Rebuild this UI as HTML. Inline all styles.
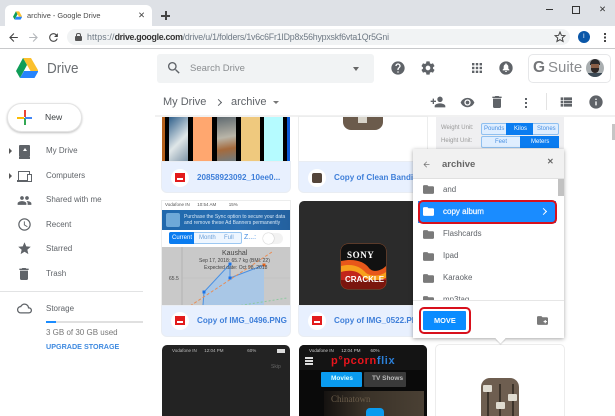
<!DOCTYPE html>
<html><head><meta charset="utf-8"><style>
html,body{margin:0;padding:0}
body{width:615px;height:416px;overflow:hidden;background:#fff;position:relative;font-family:"Liberation Sans",sans-serif}
div,span,svg{position:absolute}
.t{white-space:nowrap;line-height:1}
.i{fill:#5f6368}
.n{font-size:8px;color:#5f6368;left:46px}
.r{font-size:7.900px;color:#5f6368;left:443px}
.f{font-size:8.100px;font-weight:bold;color:#3f7fd9}
.foot{background:#e8f0fe;border-radius:0 0 5px 5px}
.c{width:18px;height:18px;border-radius:50%;background:#fff}
.red{width:10px;height:9px;background:#e31b1b}
.red:after{content:"";position:absolute;left:2px;bottom:2px;width:6px;height:2px;background:#fff}
</style></head><body>
<svg width="0" height="0" style="position:absolute"><defs>
<symbol id="help" viewBox="0 0 24 24"><path d="M12 2C6.48 2 2 6.48 2 12s4.48 10 10 10 10-4.48 10-10S17.52 2 12 2zm1 17h-2v-2h2v2zm2.07-7.75l-.9.92C13.45 12.9 13 13.5 13 15h-2v-.5c0-1.1.45-2.1 1.17-2.83l1.24-1.26c.37-.36.59-.86.59-1.41 0-1.1-.9-2-2-2s-2 .9-2 2H8c0-2.21 1.79-4 4-4s4 1.79 4 4c0 .88-.36 1.68-.93 2.25z"/></symbol>
<symbol id="gear" viewBox="0 0 24 24"><path d="M19.43 12.98c.04-.32.07-.64.07-.98s-.03-.66-.07-.98l2.11-1.65c.19-.15.24-.42.12-.64l-2-3.46c-.12-.22-.39-.3-.61-.22l-2.49 1c-.52-.4-1.08-.73-1.69-.98l-.38-2.65C14.46 2.18 14.25 2 14 2h-4c-.25 0-.46.18-.49.42l-.38 2.65c-.61.25-1.17.59-1.69.98l-2.49-1c-.23-.09-.49 0-.61.22l-2 3.46c-.13.22-.07.49.12.64l2.11 1.65c-.04.32-.07.65-.07.98s.03.66.07.98l-2.11 1.65c-.19.15-.24.42-.12.64l2 3.46c.12.22.39.3.61.22l2.49-1c.52.4 1.08.73 1.69.98l.38 2.65c.03.24.24.42.49.42h4c.25 0 .46-.18.49-.42l.38-2.65c.61-.25 1.17-.59 1.69-.98l2.49 1c.23.09.49 0 .61-.22l2-3.46c.12-.22.07-.49-.12-.64l-2.11-1.65zM12 15.5c-1.93 0-3.5-1.57-3.5-3.5s1.57-3.5 3.5-3.5 3.5 1.57 3.5 3.5-1.57 3.5-3.5 3.5z"/></symbol>
<symbol id="padd" viewBox="0 0 24 24"><path d="M15 12c2.21 0 4-1.79 4-4s-1.79-4-4-4-4 1.79-4 4 1.79 4 4 4zm-9-2V7H4v3H1v2h3v3h2v-3h3v-2H6zm9 4c-2.67 0-8 1.34-8 4v2h16v-2c0-2.66-5.33-4-8-4z"/></symbol>
<symbol id="eye" viewBox="0 0 24 24"><path d="M12 4.5C7 4.5 2.73 7.61 1 12c1.73 4.39 6 7.5 11 7.5s9.27-3.11 11-7.5c-1.73-4.39-6-7.5-11-7.5zM12 17c-2.76 0-5-2.24-5-5s2.24-5 5-5 5 2.24 5 5-2.24 5-5 5zm0-8c-1.66 0-3 1.34-3 3s1.34 3 3 3 3-1.34 3-3-1.34-3-3-3z"/></symbol>
<symbol id="del" viewBox="0 0 24 24"><path d="M6 19c0 1.1.9 2 2 2h8c1.1 0 2-.9 2-2V7H6v12zM19 4h-3.5l-1-1h-5l-1 1H5v2h14V4z"/></symbol>
<symbol id="list" viewBox="0 0 24 24"><path d="M4 14h4v-4H4v4zm0 5h4v-4H4v4zM4 9h4V5H4v4zm5 5h12v-4H9v4zm0 5h12v-4H9v4zM9 5v4h12V5H9z"/></symbol>
<symbol id="info" viewBox="0 0 24 24"><path d="M12 2C6.48 2 2 6.48 2 12s4.48 10 10 10 10-4.48 10-10S17.52 2 12 2zm1 15h-2v-6h2v6zm0-8h-2V7h2v2z"/></symbol>
<symbol id="ppl" viewBox="0 0 24 24"><path d="M16 11c1.66 0 2.99-1.34 2.99-3S17.66 5 16 5c-1.66 0-3 1.34-3 3s1.34 3 3 3zm-8 0c1.66 0 2.99-1.34 2.99-3S9.66 5 8 5C6.34 5 5 6.34 5 8s1.34 3 3 3zm0 2c-2.33 0-7 1.17-7 3.5V19h14v-2.5c0-2.33-4.67-3.5-7-3.5zm8 0c-.29 0-.62.02-.97.05 1.16.84 1.97 1.97 1.97 3.45V19h6v-2.5c0-2.33-4.67-3.5-7-3.5z"/></symbol>
<symbol id="star" viewBox="0 0 24 24"><path d="M12 17.27L18.18 21l-1.64-7.03L22 9.24l-7.19-.61L12 2 9.19 8.63 2 9.24l5.46 4.73L5.82 21z"/></symbol>
<symbol id="clock" viewBox="0 0 24 24"><path d="M11.99 2C6.47 2 2 6.48 2 12s4.47 10 9.99 10C17.52 22 22 17.52 22 12S17.52 2 11.99 2zM12 20c-4.42 0-8-3.58-8-8s3.58-8 8-8 8 3.58 8 8-3.58 8-8 8zm.5-13H11v6l5.25 3.15.75-1.23-4.5-2.67z"/></symbol>
<symbol id="cloud" viewBox="0 0 24 24"><path d="M19.35 10.04C18.67 6.59 15.64 4 12 4 9.11 4 6.6 5.64 5.35 8.04 2.34 8.36 0 10.91 0 14c0 3.31 2.69 6 6 6h13c2.76 0 5-2.24 5-5 0-2.64-2.05-4.78-4.65-4.96zM19 18H6c-2.21 0-4-1.79-4-4s1.79-4 4-4h.71C7.37 7.69 9.48 6 12 6c3.04 0 5.5 2.46 5.5 5.5v.5H19c1.66 0 3 1.34 3 3s-1.34 3-3 3z"/></symbol>
<symbol id="folder" viewBox="0 0 24 24"><path d="M10 4H4c-1.1 0-1.99.9-1.99 2L2 18c0 1.1.9 2 2 2h16c1.1 0 2-.9 2-2V8c0-1.1-.9-2-2-2h-8l-2-2z"/></symbol>
<symbol id="search" viewBox="0 0 24 24"><path d="M15.5 14h-.79l-.28-.27C15.41 12.59 16 11.11 16 9.5 16 5.91 13.09 3 9.5 3S3 5.91 3 9.5 5.91 16 9.5 16c1.61 0 3.09-.59 4.23-1.57l.27.28v.79l5 4.99L20.49 19l-4.99-5zm-6 0C7.01 14 5 11.99 5 9.5S7.01 5 9.5 5 14 7.01 14 9.5 11.99 14 9.5 14z"/></symbol>
<symbol id="back" viewBox="0 0 24 24"><path d="M20 11H7.83l5.59-5.59L12 4l-8 8 8 8 1.41-1.41L7.83 13H20v-2z"/></symbol>
<symbol id="refresh" viewBox="0 0 24 24"><path d="M17.65 6.35C16.2 4.9 14.21 4 12 4c-4.42 0-7.99 3.58-7.99 8s3.57 8 7.99 8c3.73 0 6.84-2.55 7.73-6h-2.08c-.82 2.33-3.04 4-5.65 4-3.31 0-6-2.69-6-6s2.69-6 6-6c1.66 0 3.14.69 4.22 1.78L13 11h7V4l-2.35 2.35z"/></symbol>
<symbol id="bell" viewBox="0 0 24 24"><path d="M12 2a10 10 0 1 0 0 20 10 10 0 0 0 0-20zm0 16c-.8 0-1.5-.7-1.5-1.5h3c0 .8-.7 1.5-1.5 1.5zm5-2.500H7v-1l1.500-1.500v-3c0-1.800 1-3.100 2.500-3.500V6c0-.6.400-1 1-1s1 .4 1 1v.500c1.500.4 2.500 1.700 2.500 3.500v3l1.500 1.500v1z"/></symbol>
<symbol id="logo" viewBox="0 0 22 20"><polygon points="7,0 15,0 22.500,13 14.500,13" fill="#fbc02d"/><polygon points="7,0 0,13 4,20 11,7" fill="#0f9d58"/><polygon points="4,20 18.500,20 22.500,13 8,13" fill="#2684fc"/></symbol>
</defs></svg>

<!-- chrome -->
<div style="left:0;top:0;width:615px;height:26px;background:#dee1e6"></div>
<div style="left:5px;top:5px;width:147px;height:21px;background:#fff;border-radius:6px 6px 0 0"></div>
<svg style="left:13px;top:11px" width="9" height="9"><use href="#logo"/></svg>
<div class="t" style="left:27px;top:12px;font-size:7.400px;color:#4a4a4a">archive - Google Drive</div>
<div class="t" style="left:138px;top:11px;font-size:8.500px;color:#444">✕</div>
<div style="left:161px;top:15px;width:9px;height:1.5px;background:#444"></div>
<div style="left:165px;top:11px;width:1.500px;height:9px;background:#444"></div>
<div style="left:546px;top:9px;width:7px;height:1px;background:#333"></div>
<div style="left:572px;top:6px;width:6px;height:6px;border:1px solid #333"></div>
<div class="t" style="left:599px;top:5px;font-size:8.500px;color:#333">✕</div>
<svg class="i" style="left:7px;top:31px;fill:#444" width="13" height="13"><use href="#back"/></svg>
<svg style="left:27px;top:31px;fill:#b4b7bb;transform:scaleX(-1)" width="13" height="13"><use href="#back"/></svg>
<svg style="left:47px;top:31px;fill:#444" width="13" height="13"><use href="#refresh"/></svg>
<div style="left:67px;top:29px;width:503px;height:16px;background:#f1f3f4;border-radius:8px"></div>
<div style="left:75px;top:36px;width:7px;height:5px;background:#555;border-radius:1px"></div>
<div style="left:76px;top:33px;width:3px;height:4px;border:1px solid #555;border-bottom:0;border-radius:2px 2px 0 0"></div>
<div class="t" style="left:87px;top:33px;font-size:8.800px;color:#6f7a85;letter-spacing:-.2px"><span style="position:static;letter-spacing:.15px">https://</span><span style="position:static;color:#333;font-weight:bold;letter-spacing:-.3px">drive.google.com</span>/drive/u/1/folders/1v6c6Fr1IDp8x56hypxskf6vta1Qr5Gni</div>
<svg style="left:554px;top:31px;fill:none;stroke:#444;stroke-width:2" width="12" height="12"><use href="#star"/></svg>
<div style="left:578px;top:31px;width:12px;height:12px;background:#0b57a8;border-radius:50%"></div>
<div class="t" style="left:583px;top:34px;font-size:6px;color:#fff">I</div>
<div style="left:604px;top:33px;width:2px;height:2px;background:#444;box-shadow:0 3.500px #444,0 7px #444"></div>
<div style="left:0;top:48px;width:615px;height:1px;background:#c8c9cb"></div>

<!-- header -->
<svg style="left:16px;top:58px" width="22" height="20"><use href="#logo"/></svg>
<div class="t" style="left:47px;top:61px;font-size:15px;color:#6b6f73;transform:scaleX(.9);transform-origin:left">Drive</div>
<div style="left:157px;top:54px;width:217px;height:29px;background:#f1f3f4;border-radius:3px"></div>
<svg class="i" style="left:166px;top:60px" width="16" height="16"><use href="#search"/></svg>
<div class="t" style="left:190px;top:64px;font-size:9.500px;color:#8a8d90">Search Drive</div>
<div style="left:353px;top:67px;width:0;height:0;border:3.500px solid transparent;border-top:4px solid #666;border-bottom:0"></div>
<svg class="i" style="left:390px;top:60px" width="16" height="16"><use href="#help"/></svg>
<svg class="i" style="left:420px;top:60px" width="16" height="16"><use href="#gear"/></svg>
<svg style="left:472px;top:63px;fill:#5f6368" width="10" height="10" viewBox="0 0 10 10"><rect width="2.400" height="2.400"/><rect x="3.800" width="2.400" height="2.400"/><rect x="7.600" width="2.400" height="2.400"/><rect y="3.800" width="2.400" height="2.400"/><rect x="3.800" y="3.800" width="2.400" height="2.400"/><rect x="7.600" y="3.800" width="2.400" height="2.400"/><rect y="7.600" width="2.400" height="2.400"/><rect x="3.800" y="7.600" width="2.400" height="2.400"/><rect x="7.600" y="7.600" width="2.400" height="2.400"/></svg>
<svg class="i" style="left:498px;top:60px" width="16" height="16"><use href="#bell"/></svg>
<div style="left:528px;top:54px;width:81px;height:27px;border:1px solid #e6e7e9;border-radius:5px"></div>
<div class="t" style="left:533px;top:60px;font-size:15.500px;color:#747679;font-weight:bold">G</div>
<div class="t" style="left:548px;top:60px;font-size:15px;color:#8a8c8f">Suite</div>
<div style="left:586px;top:59px;width:18px;height:18px;border-radius:50%;overflow:hidden;background:#a9aeb0">
<div style="left:4px;top:0;width:10px;height:6px;background:#2b2a2c;border-radius:5px 5px 0 0"></div>
<div style="left:5px;top:5px;width:8px;height:6px;background:#8a5f47"></div>
<div style="left:5px;top:9px;width:8px;height:5px;background:#2e2624;border-radius:0 0 4px 4px"></div>
<div style="left:2px;top:14px;width:14px;height:4px;background:#3c4a55"></div>
</div>
<div class="t" style="left:163px;top:97px;font-size:11px;color:#5f6368">My Drive</div>
<div style="left:216px;top:99.500px;width:4px;height:4px;border:solid #5f6368;border-width:1px 1px 0 0;transform:rotate(45deg)"></div>
<div class="t" style="left:231px;top:97px;font-size:11px;color:#5f6368">archive</div>
<div style="left:273px;top:101px;width:0;height:0;border:3px solid transparent;border-top:3px solid #777;border-bottom:0"></div>
<svg class="i" style="left:430px;top:94px" width="16" height="16"><use href="#padd"/></svg>
<svg class="i" style="left:460px;top:95px" width="15" height="15"><use href="#eye"/></svg>
<svg class="i" style="left:489px;top:94px" width="16" height="16"><use href="#del"/></svg>
<div style="left:525px;top:98px;width:2px;height:2px;background:#5f6368;box-shadow:0 4px #5f6368,0 8px #5f6368"></div>
<div style="left:546px;top:93px;width:1px;height:17px;background:#e3e3e3"></div>
<svg class="i" style="left:558px;top:94px" width="16" height="16"><use href="#list"/></svg>
<svg class="i" style="left:588px;top:94px" width="16" height="16"><use href="#info"/></svg>
<div style="left:155px;top:115px;width:460px;height:2px;background:#f1f1f1"></div>

<!-- sidebar -->
<div style="left:7px;top:103px;width:73px;height:27px;background:#fff;border:1px solid #e4e4e4;border-radius:15px;box-shadow:0 1px 2px rgba(0,0,0,.25)"></div>
<div style="left:23.500px;top:110px;width:2px;height:7px;background:#ea4335"></div>
<div style="left:23.500px;top:118px;width:2px;height:7px;background:#34a853"></div>
<div style="left:17px;top:116.500px;width:7px;height:2px;background:#fbbc05"></div>
<div style="left:25px;top:116.500px;width:7px;height:2px;background:#4285f4"></div>
<div class="t" style="left:45px;top:113px;font-size:8.600px;color:#3c4043">New</div>
<div style="left:9px;top:148px;width:0;height:0;border:3px solid transparent;border-left:3.500px solid #555;border-right:0"></div>
<div style="left:19px;top:145px;width:11px;height:12px;background:#5f6368;border-radius:1px"></div>
<div style="left:23px;top:148px;width:0;height:0;border:2px solid transparent;border-bottom:3.500px solid #fff;border-top:0"></div>
<div style="left:19px;top:157px;width:11px;height:1.500px;background:#5f6368"></div>
<div class="t n" style="top:147px">My Drive</div>
<div style="left:9px;top:173px;width:0;height:0;border:3px solid transparent;border-left:3.500px solid #555;border-right:0"></div>
<div style="left:18px;top:171px;width:10px;height:9px;border:1px solid #5f6368;border-bottom:0"></div>
<div style="left:17px;top:180px;width:11px;height:1.500px;background:#5f6368"></div>
<div style="left:27px;top:174px;width:3px;height:6px;border:1px solid #5f6368;background:#fff"></div>
<div class="t n" style="top:172px">Computers</div>
<svg class="i" style="left:17px;top:193px" width="15" height="15"><use href="#ppl"/></svg>
<div class="t n" style="top:196px">Shared with me</div>
<svg class="i" style="left:17px;top:217px" width="15" height="15"><use href="#clock"/></svg>
<div class="t n" style="top:221px">Recent</div>
<svg class="i" style="left:17px;top:241px" width="15" height="15"><use href="#star"/></svg>
<div class="t n" style="top:245px">Starred</div>
<svg class="i" style="left:16px;top:266px" width="16" height="16"><use href="#del"/></svg>
<div class="t n" style="top:270px">Trash</div>
<div style="left:0;top:291px;width:143px;height:1px;background:#e2e3e4"></div>
<svg class="i" style="left:17px;top:301px" width="15" height="15"><use href="#cloud"/></svg>
<div class="t n" style="top:305px">Storage</div>
<div style="left:46px;top:321px;width:97px;height:2px;background:#e0e0e0"></div>
<div style="left:46px;top:321px;width:10px;height:2px;background:#1a8cff"></div>
<div class="t n" style="top:329px;color:#777">3 GB of 30 GB used</div>
<div class="t" style="left:46px;top:343px;font-size:7.200px;font-weight:bold;color:#3f8ae0">UPGRADE STORAGE</div>

<!-- col1 row1 -->
<div style="left:162px;top:117px;width:128px;height:45px;overflow:hidden;background:#000">
<div style="left:0;width:3px;height:45px;background:#b5611c"></div>
<div style="left:7px;width:19px;height:45px;background:linear-gradient(135deg,#2f5f8a,#dfe6e8 55%,#7c93a6)"></div>
<div style="left:31px;width:19px;height:45px;background:#ffa76f"></div>
<div style="left:55px;width:19px;height:45px;background:linear-gradient(170deg,#5f6a70,#b9b5a8 45%,#a56a3c 70%,#6d7d85)"></div>
<div style="left:79px;width:19px;height:45px;background:#efc97e"></div>
<div style="left:102px;width:19px;height:45px;background:#b5fbff"></div>
<div style="left:125px;width:3px;height:45px;background:#0a5bd8"></div>
</div>
<div class="foot" style="left:162px;top:162px;width:128px;height:30px;box-shadow:0 0 0 1px #e9edf3"></div>
<div class="c" style="left:171px;top:169px"></div><div class="red" style="left:175px;top:173px"></div>
<div class="t f" style="left:197px;top:174px">20858923092_10ee0...</div>
<!-- col2 row1 -->
<div style="left:299px;top:117px;width:128px;height:45px;background:#fff;box-shadow:0 0 0 1px #eceded"></div>
<div style="left:343px;top:117px;width:40px;height:13px;background:#6b5b4c;border-radius:0 0 8px 8px"></div>
<div style="left:358px;top:117px;width:9px;height:6px;background:#d8d4ca"></div>
<div class="foot" style="left:299px;top:162px;width:128px;height:30px;box-shadow:0 0 0 1px #e9edf3"></div>
<div class="c" style="left:308px;top:169px"></div>
<div style="left:312px;top:173px;width:10px;height:10px;background:#54453a;border-radius:2px"></div>
<div class="t f" style="left:334px;top:174px">Copy of Clean Bandit - Rockabye</div>
<!-- col3 row1 -->
<div style="left:436px;top:117px;width:128px;height:40px;background:#efeff1"></div>
<div class="t" style="left:441px;top:125px;font-size:6px;color:#999">Weight Unit:</div>
<div class="t" style="left:441px;top:138px;font-size:6px;color:#999">Height Unit:</div>
<div style="left:481px;top:123px;width:78px;height:12px;background:#dfeeff;border:1px solid #8fc0f0;box-sizing:border-box;border-radius:2px"></div>
<div style="left:506px;top:123px;width:27px;height:12px;background:#0a7cf0"></div>
<div class="t" style="left:484px;top:126px;font-size:6px;color:#4a90e2">Pounds</div>
<div class="t" style="left:514px;top:126px;font-size:6px;color:#fff">Kilos</div>
<div class="t" style="left:537px;top:126px;font-size:6px;color:#4a90e2">Stones</div>
<div style="left:481px;top:136px;width:78px;height:12px;background:#dfeeff;border:1px solid #8fc0f0;box-sizing:border-box;border-radius:2px"></div>
<div style="left:520px;top:136px;width:39px;height:12px;background:#0a7cf0"></div>
<div class="t" style="left:495px;top:139px;font-size:6px;color:#4a90e2">Feet</div>
<div class="t" style="left:531px;top:139px;font-size:6px;color:#fff">Meters</div>
<div style="left:612px;top:124px;width:3px;height:16px;background:#c5c5c5"></div>

<!-- col1 row2 -->
<div style="left:162px;top:201px;width:128px;height:105px;background:#fff;overflow:hidden;box-shadow:0 0 0 1px #eceded">
<div class="t" style="left:3px;top:2px;font-size:4.500px;color:#555">Vodafone IN &nbsp;&nbsp;&nbsp;&nbsp; 10:54 AM &nbsp;&nbsp;&nbsp;&nbsp;&nbsp;&nbsp;&nbsp;&nbsp; 15%</div>
<div style="left:0;top:9px;width:128px;height:20px;background:linear-gradient(90deg,#1f68ac,#2a6fb2 60%,#23609e)"></div>
<div style="left:4px;top:12px;width:14px;height:14px;background:#6ea9d8;border-radius:2px"></div>
<div class="t" style="left:22px;top:12.500px;font-size:5px;line-height:6px;color:#d7e7f5">Purchase the Sync option to secure your data<br>and remove these Ad Banners permanently</div>
<div style="left:7px;top:31px;width:73px;height:12px;background:#eef6ff;border:1px solid #9cc8f2;box-sizing:border-box;border-radius:2px"></div>
<div style="left:7px;top:31px;width:25px;height:12px;background:#0a7cf0;border-radius:2px 0 0 2px"></div>
<div class="t" style="left:10px;top:34px;font-size:6px;color:#fff">Current</div>
<div class="t" style="left:37px;top:34px;font-size:6px;color:#6a9fd8">Month</div>
<div class="t" style="left:62px;top:34px;font-size:6px;color:#6a9fd8">Full</div>
<div class="t" style="left:82px;top:33px;font-size:7px;color:#3f8ae0">Z...:</div>
<div style="left:101px;top:32px;width:20px;height:11px;border-radius:6px;background:#f2f2f2"></div>
<div style="left:101px;top:32px;width:11px;height:11px;border-radius:50%;background:#fff;box-shadow:0 0 1px #888"></div>
<div style="left:0;top:46px;width:128px;height:59px;background:#c9c9c9"></div>
<svg style="left:0;top:46px" width="128" height="59"><line x1="20" y1="0" x2="20" y2="59" stroke="#a9a9a9" stroke-width=".7"/><line x1="20" y1="31" x2="128" y2="31" stroke="#bbb" stroke-width=".5"/><polygon points="41,59 42,45 68,17 68,31 102,18 102,59" fill="#a9c7e6"/><polyline points="41,58 42,45 68,17 68,31 102,18" fill="none" stroke="#4a90e2" stroke-width="1"/><rect x="40.500" y="43.500" width="3" height="3" fill="#1a73e8"/><rect x="66.500" y="15.500" width="3" height="3" fill="#1a73e8"/><rect x="66.500" y="29.500" width="3" height="3" fill="#1a73e8"/><rect x="100.500" y="16.500" width="3" height="3" fill="#e8641a"/><line x1="28" y1="59" x2="110" y2="5" stroke="#e98c55" stroke-width="1" stroke-dasharray="3 2"/><line x1="75" y1="59" x2="125" y2="51" stroke="#8dc9a0" stroke-width="1" stroke-dasharray="2 2"/></svg>
<div class="t" style="left:60px;top:49px;font-size:7px;color:#444">Kaushal</div>
<div class="t" style="left:37px;top:58px;font-size:5px;color:#444">Sep 17, 2018: 65.7 kg (BMI: 22)</div>
<div class="t" style="left:42px;top:65px;font-size:5px;color:#444">Expected date: Oct 98, 2018</div>
<div class="t" style="left:7px;top:76px;font-size:5px;color:#444">65.5</div>
</div>
<div class="foot" style="left:162px;top:306px;width:128px;height:30px;box-shadow:0 0 0 1px #e9edf3"></div>
<div class="c" style="left:171px;top:312px"></div><div class="red" style="left:175px;top:316px"></div>
<div class="t f" style="left:197px;top:317px">Copy of IMG_0496.PNG</div>
<!-- col2 row2 -->
<div style="left:299px;top:201px;width:128px;height:105px;background:#2b2b2b;border-radius:5px 5px 0 0"></div>
<div style="left:341px;top:244px;width:45px;height:45px;border-radius:7px;background:#111;box-shadow:0 0 0 .5px #8a4a2a;overflow:hidden">
<svg style="left:0;top:0" width="45" height="45" viewBox="0 0 45 45"><path d="M0 17C14 14 24 18 28 24 32 29 40 27 45 22V45H0Z" fill="#e8571a"/><path d="M0 22C12 19 20 23 25 29 30 33 40 32 45 28V45H0Z" fill="#f7a01c"/><path d="M0 28C12 25 18 28 22 33 28 38 38 37 45 34V45H0Z" fill="#c2261a"/><path d="M0 36H45V45H0Z" fill="#7a160e"/></svg>
<div class="t" style="left:6px;top:7px;font-size:9px;font-weight:bold;font-family:'Liberation Serif',serif;color:#fff;letter-spacing:.6px">SONY</div>
<div class="t" style="left:4px;top:32px;font-size:8px;font-weight:bold;color:#fff">CRACKLE</div>
</div>
<div class="foot" style="left:299px;top:306px;width:128px;height:30px;box-shadow:0 0 0 1px #e9edf3"></div>
<div class="c" style="left:308px;top:312px"></div><div class="red" style="left:312px;top:316px"></div>
<div class="t f" style="left:334px;top:317px">Copy of IMG_0522.PNG</div>

<!-- row3 -->
<div style="left:162px;top:345px;width:128px;height:71px;background:#232323;border-radius:5px 5px 0 0">
<div class="t" style="left:10px;top:4px;font-size:4.500px;color:#bbb">Vodafone IN &nbsp;&nbsp;&nbsp;&nbsp; 12:04 PM &nbsp;&nbsp;&nbsp;&nbsp;&nbsp;&nbsp;&nbsp;&nbsp;&nbsp;&nbsp;&nbsp;&nbsp;&nbsp;&nbsp;&nbsp;&nbsp;&nbsp; 60%</div>
<div style="left:115px;top:4px;width:8px;height:4px;background:#ddd"></div>
<div class="t" style="left:109px;top:20px;font-size:5px;color:#666">Skip</div>
</div>
<div style="left:299px;top:345px;width:128px;height:71px;background:#0a0a0a;border-radius:5px 5px 0 0;overflow:hidden">
<div style="left:0;top:0;width:128px;height:25px;background:#141414"></div>
<div class="t" style="left:10px;top:4px;font-size:4.500px;color:#ccc">Vodafone IN &nbsp;&nbsp;&nbsp;&nbsp; 12:04 PM &nbsp;&nbsp;&nbsp;&nbsp;&nbsp;&nbsp; 60%</div>
<div style="left:6px;top:12px;width:8px;height:1.500px;background:#ddd;box-shadow:0 3px #ddd,0 6px #ddd"></div>
<div class="t" style="left:32px;top:11px;font-size:11px;font-weight:bold;color:#e8141c;letter-spacing:.6px">p°pcorn<span style="position:static;color:#2b7fd8">flix</span></div>
<div style="left:22px;top:27px;width:41px;height:15px;background:#0a9bef;border-radius:1px"></div>
<div class="t" style="left:32px;top:31px;font-size:6.500px;font-weight:bold;color:#dff">Movies</div>
<div style="left:65px;top:27px;width:42px;height:15px;background:#3a3a3a;border-radius:1px"></div>
<div class="t" style="left:73px;top:31px;font-size:6.500px;font-weight:bold;color:#bbb">TV Shows</div>
<div style="left:25px;top:46px;width:100px;height:25px;background:linear-gradient(90deg,#151210,#3a3228 40%,#4a4034)"></div>
<div class="t" style="left:32px;top:50px;font-size:9px;font-family:'Liberation Serif',serif;color:#6b5d4a">Chinatown</div>
<div style="left:67px;top:63px;width:18px;height:14px;background:#0a9bef;border-radius:4px"></div>
</div>
<div style="left:436px;top:345px;width:128px;height:71px;background:#fff;box-shadow:0 0 0 1px #ececec;border-radius:4px 4px 0 0"></div>
<div style="left:481px;top:378px;width:38px;height:38px;background:#6e5e50;border-radius:9px 9px 0 0"></div>
<div style="left:487px;top:385px;width:2px;height:31px;background:#3c332a"></div>
<div style="left:499px;top:384px;width:2px;height:32px;background:#3c332a"></div>
<div style="left:512px;top:384px;width:2px;height:32px;background:#3c332a"></div>
<div style="left:483px;top:385px;width:9px;height:7px;background:#dfdbd0;border-radius:1px"></div>
<div style="left:496px;top:402px;width:9px;height:7px;background:#dfdbd0;border-radius:1px"></div>
<div style="left:508px;top:394px;width:9px;height:7px;background:#dfdbd0;border-radius:1px"></div>

<!-- dialog -->
<div style="left:413px;top:149px;width:151px;height:189px;background:#fff;box-shadow:0 1px 4px rgba(0,0,0,.35)"></div>
<div style="left:497px;top:335px;width:7px;height:7px;background:#fff;transform:rotate(45deg);box-shadow:1px 1px 1px rgba(0,0,0,.15)"></div>
<div style="left:413px;top:149px;width:151px;height:30px;background:#f1f1f1;border-bottom:1px solid #e0e0e0;box-sizing:border-box"></div>
<svg style="left:422px;top:160px;fill:#777" width="9" height="9"><use href="#back"/></svg>
<div class="t" style="left:442px;top:159.500px;font-size:9.500px;font-weight:bold;color:#666">archive</div>
<div class="t" style="left:547px;top:158px;font-size:8px;font-weight:bold;color:#666">✕</div>
<div style="left:558px;top:179px;width:6px;height:17px;background:#c2c2c2"></div>
<svg style="left:423px;top:184px;fill:#7a7a7a" width="11" height="11" viewBox="2 3 20 18"><use href="#folder" x="0" y="0" width="24" height="24"/></svg>
<div class="t r" style="top:186px">and</div>
<div style="left:418px;top:201px;width:138px;height:22px;background:#1a8cff"></div>
<div style="left:418px;top:200px;width:135px;height:20px;border:2px solid #d8101c;border-radius:5px"></div>
<svg style="left:423px;top:206px;fill:#fff" width="11" height="11" viewBox="2 3 20 18"><use href="#folder" x="0" y="0" width="24" height="24"/></svg>
<div class="t" style="left:443px;top:208px;font-size:8px;color:#f2f8ff;-webkit-text-stroke:.25px #f2f8ff">copy album</div>
<div style="left:541px;top:209px;width:4px;height:4px;border:solid #fff;border-width:1.500px 1.500px 0 0;transform:rotate(45deg)"></div>
<svg style="left:423px;top:229px;fill:#7a7a7a" width="11" height="11" viewBox="2 3 20 18"><use href="#folder" x="0" y="0" width="24" height="24"/></svg>
<div class="t r" style="top:230px">Flashcards</div>
<svg style="left:423px;top:251px;fill:#7a7a7a" width="11" height="11" viewBox="2 3 20 18"><use href="#folder" x="0" y="0" width="24" height="24"/></svg>
<div class="t r" style="top:252px">Ipad</div>
<svg style="left:423px;top:273px;fill:#7a7a7a" width="11" height="11" viewBox="2 3 20 18"><use href="#folder" x="0" y="0" width="24" height="24"/></svg>
<div class="t r" style="top:274px">Karaoke</div>
<div style="left:413px;top:295px;width:145px;height:5px;overflow:hidden">
<svg style="left:10px;top:0;fill:#7a7a7a" width="11" height="11" viewBox="2 3 20 18"><use href="#folder" x="0" y="0" width="24" height="24"/></svg>
<div class="t r" style="left:30px;top:1px">mp3tag</div>
</div>
<div style="left:413px;top:300px;width:151px;height:1px;background:#e6e6e6"></div>
<div style="left:423px;top:311px;width:43px;height:19px;background:#0a8cff;border-radius:1px"></div>
<div style="left:419px;top:307px;width:48px;height:23px;border:2px solid #d8101c;border-radius:5px"></div>
<div class="t" style="left:434px;top:316.500px;font-size:7.400px;font-weight:bold;color:#fff">MOVE</div>
<svg style="left:537px;top:315px;fill:#7a7a7a" width="11" height="11" viewBox="2 3 20 18"><path d="M10 4H4c-1.100 0-2 .9-2 2v12c0 1.100.9 2 2 2h16c1.100 0 2-.9 2-2V8c0-1.100-.9-2-2-2h-8l-2-2z"/><path d="M16 11v2h-2v2h2v2h2v-2h2v-2h-2v-2z" fill="#fff"/></svg>
</body></html>
